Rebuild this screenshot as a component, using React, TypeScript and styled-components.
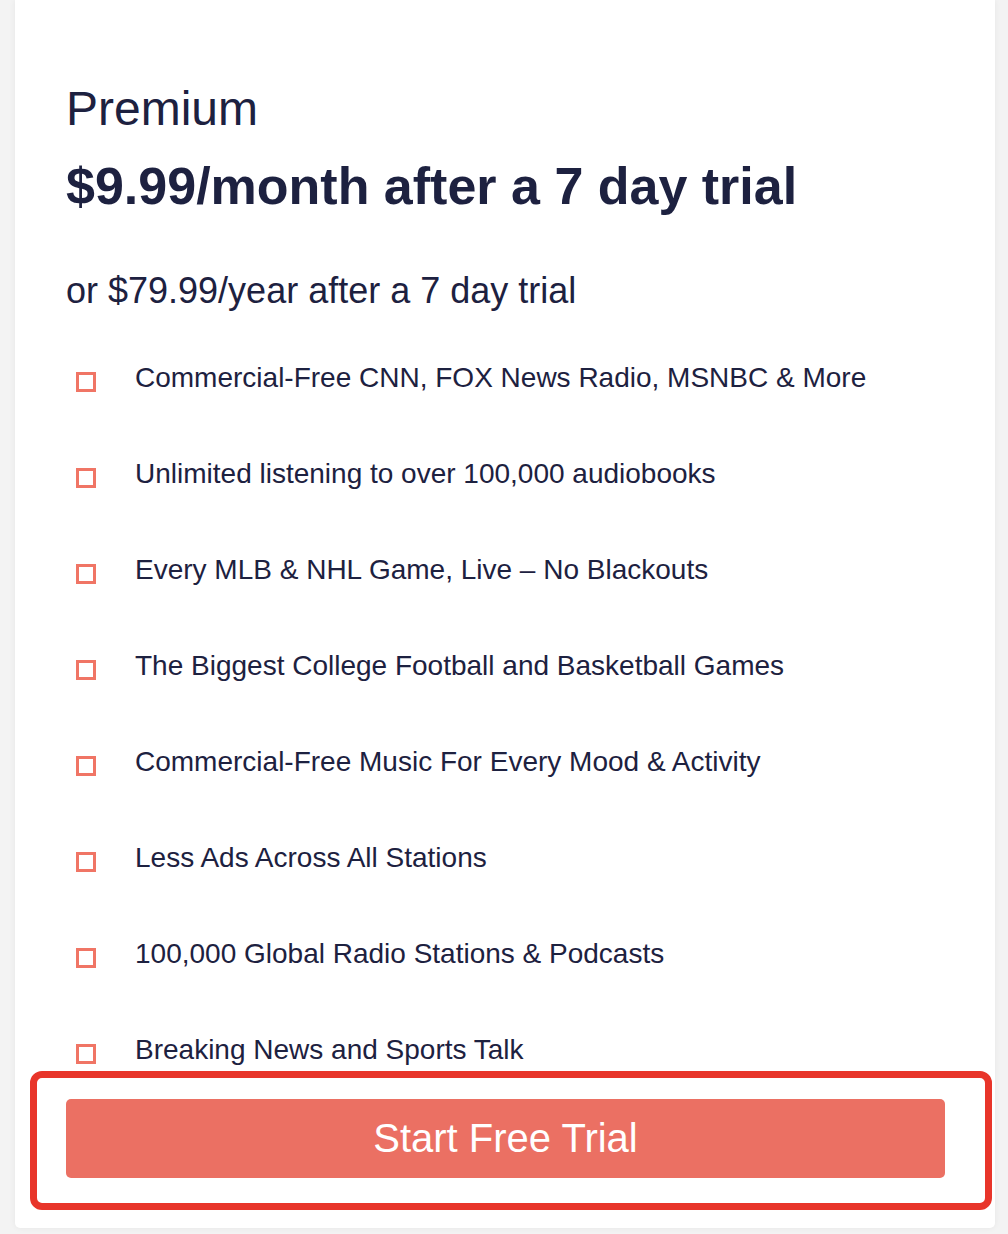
import styled, { createGlobalStyle } from 'styled-components';

const features = [
	'Commercial-Free CNN, FOX News Radio, MSNBC & More',
	'Unlimited listening to over 100,000 audiobooks',
	'Every MLB & NHL Game, Live – No Blackouts',
	'The Biggest College Football and Basketball Games',
	'Commercial-Free Music For Every Mood & Activity',
	'Less Ads Across All Stations',
	'100,000 Global Radio Stations & Podcasts',
	'Breaking News and Sports Talk',
];

const GlobalStyle = createGlobalStyle`
	html, body {
		margin: 0;
		padding: 0;
		background: #f3f3f3;
		font-family: "Liberation Sans", Arial, sans-serif;
	}
`;

export default function App() {
	return (
		<>
			<GlobalStyle />
			<SPage>
				<SCard>
					<SPlanName>Premium</SPlanName>
					<SPrice>$9.99/month after a 7 day trial</SPrice>
					<SAltPrice>or $79.99/year after a 7 day trial</SAltPrice>
					<SFeatureList>
						{features.map((f) => (
							<SFeature key={f}>
								<SBox />
								<span>{f}</span>
							</SFeature>
						))}
					</SFeatureList>
					<SButtonArea>
						<SHighlight />
						<SStartButton type='button'>Start Free Trial</SStartButton>
					</SButtonArea>
				</SCard>
			</SPage>
		</>
	);
}

const SPage = styled.div`
	width: 1008px;
	height: 1234px;
	padding: 0 13px 0 15px;
	box-sizing: border-box;
	overflow: hidden;
`;

const SCard = styled.div`
	background: #ffffff;
	height: 1228px;
	border-radius: 0 0 5px 5px;
	box-shadow: 0 0 6px rgba(0, 0, 0, 0.06);
	padding: 0 50px 0 51px;
	box-sizing: border-box;
	color: #1d2140;
	display: flex;
	flex-direction: column;
`;

const SPlanName = styled.h2`
	margin: 83px 0 0;
	font-size: 48px;
	font-weight: 400;
	line-height: 52px;
`;

const SPrice = styled.h1`
	margin: 23px 0 0;
	font-size: 52px;
	font-weight: 700;
	line-height: 56px;
`;

const SAltPrice = styled.p`
	margin: 57px 0 0;
	font-size: 36px;
	line-height: 40px;
`;

const SFeatureList = styled.ul`
	list-style: none;
	margin: 52px 0 0;
	padding: 0;
	display: flex;
	flex-direction: column;
	gap: 66px;
`;

const SFeature = styled.li`
	display: flex;
	align-items: center;
	font-size: 28px;
	line-height: 30px;
	gap: 39px;
	padding-left: 10px;
`;

const SBox = styled.span`
	width: 20px;
	height: 20px;
	box-sizing: border-box;
	border: 3px solid #f07565;
	flex: none;
	margin-top: 8px;
`;

const SButtonArea = styled.div`
	position: relative;
	margin-top: 34px;
`;

const SHighlight = styled.div`
	position: absolute;
	left: -36px;
	right: -47px;
	top: -28px;
	bottom: -32px;
	border: 7px solid #e8352a;
	border-radius: 12px;
	pointer-events: none;
`;

const SStartButton = styled.button`
	display: block;
	width: 100%;
	height: 79px;
	border: none;
	border-radius: 5px;
	background: #eb7063;
	color: #ffffff;
	font-family: "Liberation Sans", Arial, sans-serif;
	font-size: 40px;
	cursor: pointer;
`;
